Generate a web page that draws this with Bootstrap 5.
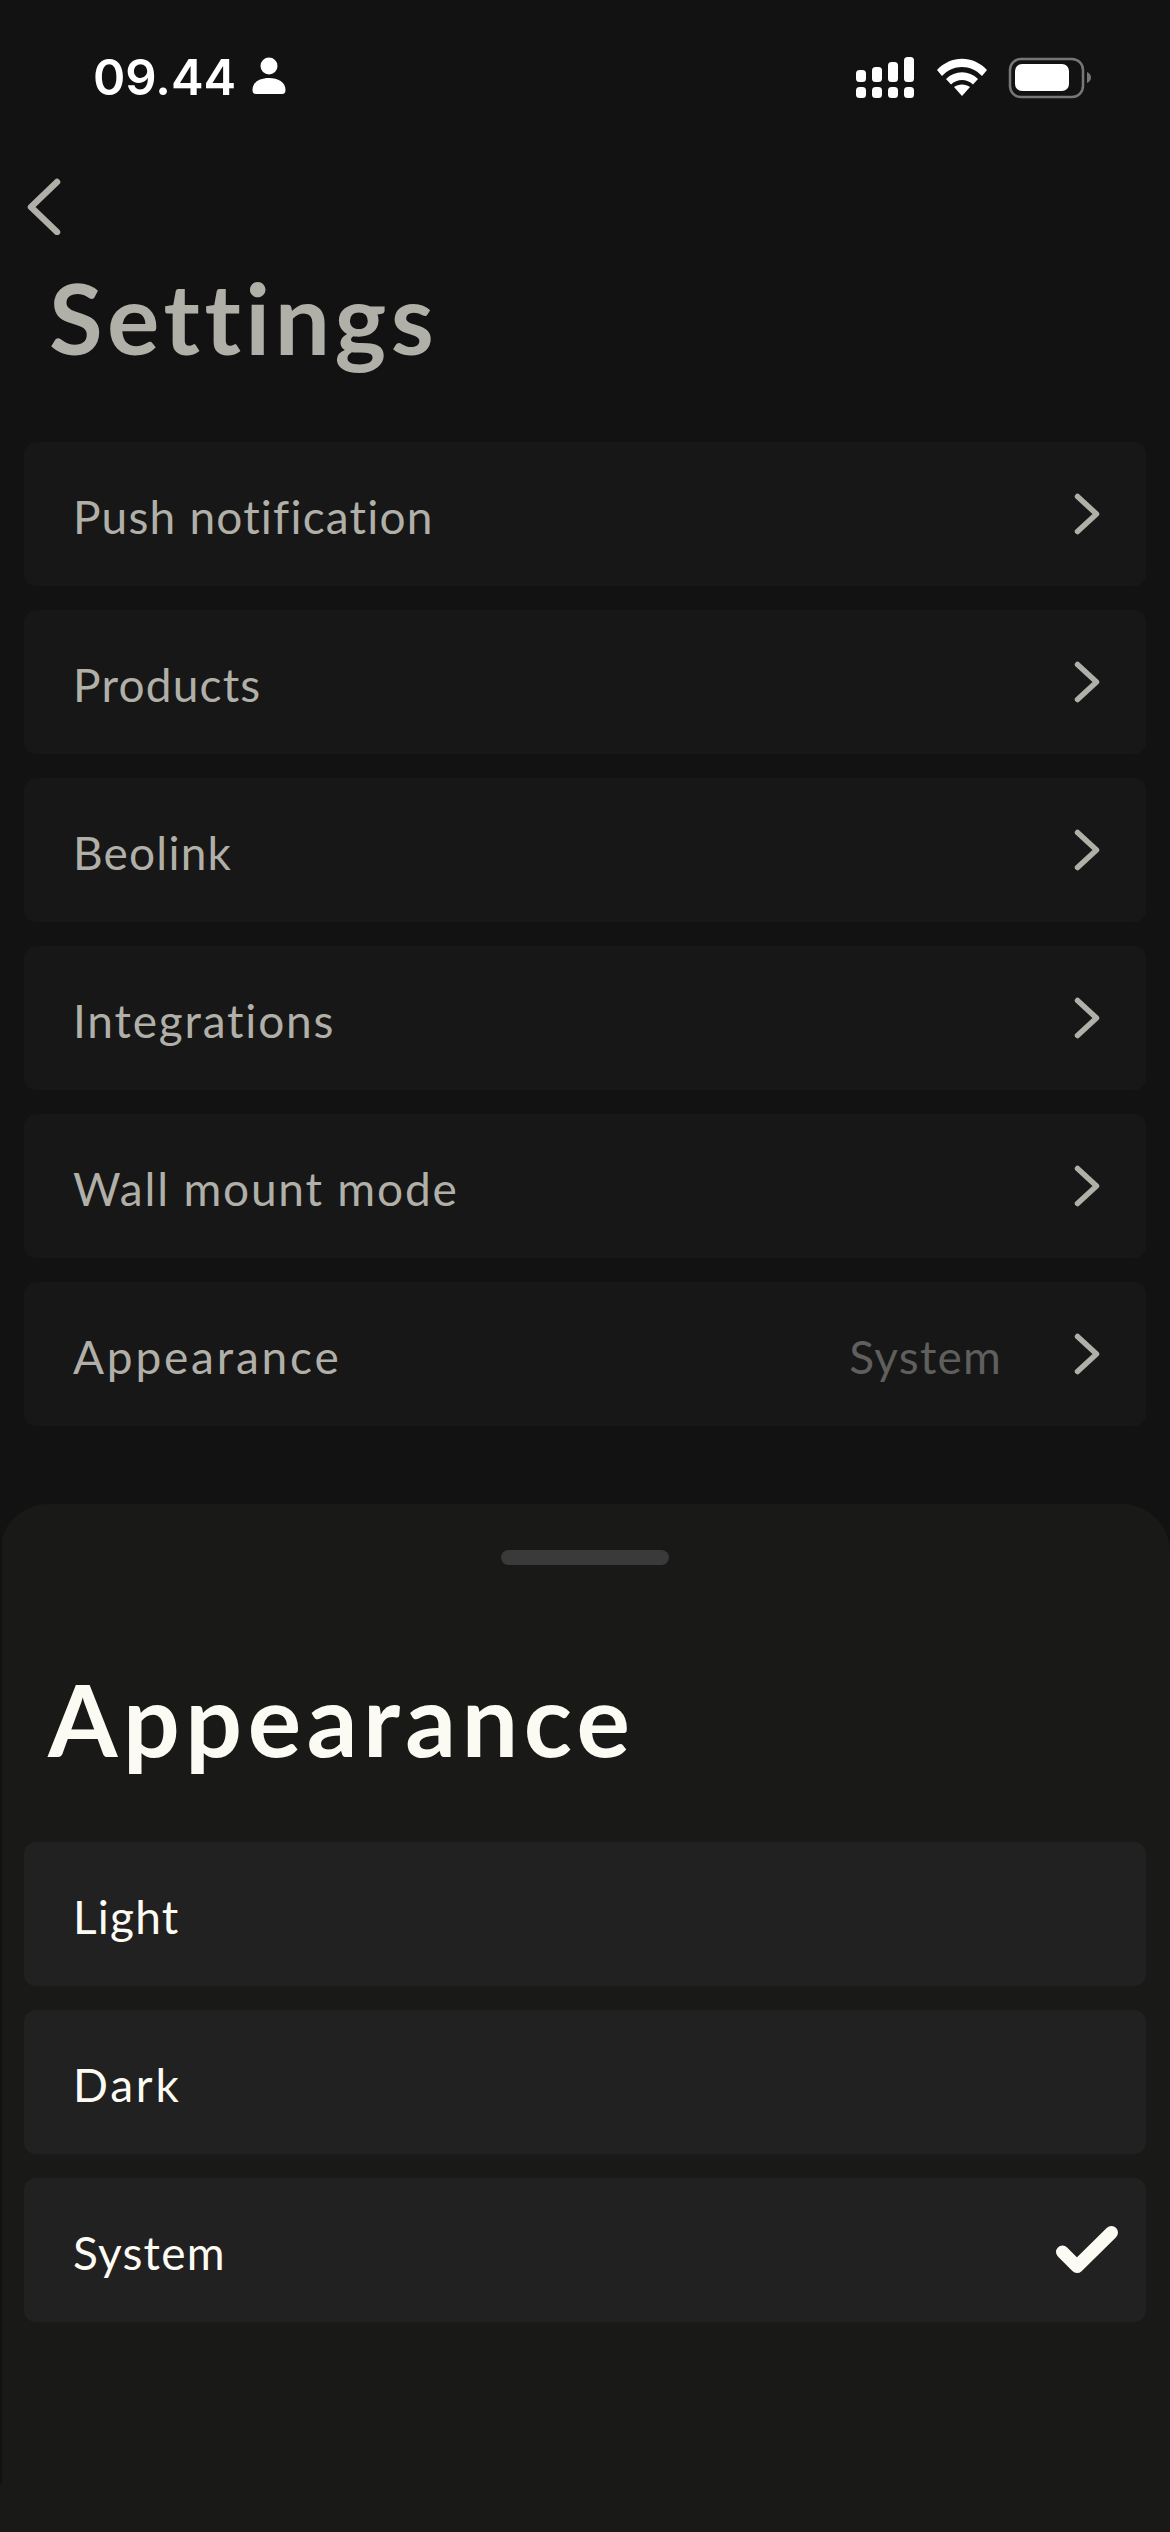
<!DOCTYPE html>
<html lang="en">
<head>
    <meta charset="UTF-8">
    <meta name="viewport" content="width=device-width, initial-scale=1.0">
    <title>Settings</title>
    <link href="https://cdn.jsdelivr.net/npm/bootstrap@5.3.0/dist/css/bootstrap.min.css" rel="stylesheet">
    <style>
        body {
            background-color: #111211;
            font-family: "Lato", "Liberation Sans", sans-serif;
        }
        .app-page {
            width: 1170px;
            height: 2532px;
            overflow: hidden;
        }
        .status-bar {
            height: 178px;
            padding: 57px 79px 0 93px;
        }
        .status-time {
            font-family: "Inter", "Liberation Sans", sans-serif;
            font-size: 49px;
            font-weight: 600;
            line-height: 42px;
            color: #fff;
        }
        .back-row {
            height: 57px;
            padding-left: 27px;
        }
        .page-title {
            font-size: 98px;
            font-weight: 700;
            line-height: 100px;
            letter-spacing: 4.5px;
            color: #b0afa8;
            margin: 32px 0 75px 49px;
        }
        .row-stack {
            gap: 24px;
            margin: 0 24px;
        }
        .setting-row {
            height: 144px;
            padding: 0 46px 0 49px;
            border: 0;
            border-radius: 12px !important;
            background-color: #171717;
            color: #b0afa8;
            font-size: 46px;
            letter-spacing: 1.2px;
            margin: 0 !important;
        }
        .row-label {
            padding-top: 5px;
        }
        .track-mid {
            letter-spacing: 1.8px;
        }
        .track-wide {
            letter-spacing: 2.8px;
        }
        .setting-value {
            color: #5f5f5d;
            margin-right: 72px;
        }
        .sheet {
            margin-top: 78px;
            background: linear-gradient(#111211, #111211) left top / 2px 980px no-repeat, #191918;
            border-radius: 48px 48px 0 0;
            padding-top: 46px;
        }
        .sheet-handle {
            width: 168px;
            height: 15px;
            border-radius: 8px;
            background-color: #3a3a3a;
        }
        .sheet-title {
            font-size: 100px;
            font-weight: 700;
            line-height: 100px;
            letter-spacing: 5.6px;
            color: #fcfbf3;
            margin: 103px 0 74px 48px;
        }
        .sheet .setting-row {
            background-color: #212121;
            color: #fcfbf3;
        }
        .sheet .check-row {
            padding-right: 26px;
        }
    </style>
</head>
<body>
    <div class="app-page d-flex flex-column">
        <div class="status-bar d-flex justify-content-between align-items-start">
            <div class="d-flex align-items-start gap-3">
                <span class="status-time">09.44</span>
                <svg width="34" height="38" viewBox="0 0 34 38" fill="#fff"><circle cx="17" cy="9" r="8.5"/><path d="M0.5 33C0.5 25 8 21 17 21s16.5 4 16.500 12c0 2.500-1 4-3.500 4H4c-2.500 0-3.500-1.500-3.500-4z"/></svg>
            </div>
            <svg width="235" height="42" viewBox="856 57 235 42">
                <g fill="#fff">
                    <rect x="856" y="70" width="10" height="12" rx="3.500"/>
                    <rect x="872" y="67" width="10" height="15" rx="3.500"/>
                    <rect x="888" y="62" width="10" height="20" rx="3.500"/>
                    <rect x="904" y="57" width="10" height="25" rx="3.500"/>
                    <rect x="856" y="87" width="10" height="11" rx="3.500"/>
                    <rect x="872" y="87" width="10" height="11" rx="3.500"/>
                    <rect x="888" y="87" width="10" height="11" rx="3.500"/>
                    <rect x="904" y="87" width="10" height="11" rx="3.500"/>
                    <path d="M962 96l-8-9c4.500-3.500 11.500-3.500 16 0z"/>
                    <path d="M937 70c14-15 36-15 50 0l-5 6c-11-12-29-12-40 0z"/>
                    <path d="M946 79c9-9 23-9 32 0l-5 5.500c-6-6-16-6-22 0z"/>
                    <rect x="1015" y="64" width="54" height="27" rx="7"/>
                </g>
                <rect x="1010" y="59" width="73" height="38" rx="11" fill="none" stroke="#777" stroke-width="2.500"/>
                <path d="M1087 72c2.500 1 4 3 4 5.500s-1.500 4.500-4 5.500z" fill="#777"/>
            </svg>
        </div>

        <div class="back-row">
            <svg width="36" height="57" viewBox="0 0 36 57" fill="none" stroke="#b0afa8" stroke-width="6.500" stroke-linecap="round" stroke-linejoin="round"><path d="M30 4L4 29L30 54"/></svg>
        </div>

        <h1 class="page-title">Settings</h1>

        <div class="list-group row-stack">
            <a class="list-group-item setting-row d-flex align-items-center justify-content-between"><span class="row-label">Push notification</span><svg width="26" height="42" viewBox="0 0 26 42" fill="none" stroke="#b0afa8" stroke-width="5.500" stroke-linecap="round" stroke-linejoin="round"><path d="M3.500 3.500L22.500 21L3.500 38.500"/></svg></a>
            <a class="list-group-item setting-row d-flex align-items-center justify-content-between"><span class="row-label">Products</span><svg width="26" height="42" viewBox="0 0 26 42" fill="none" stroke="#b0afa8" stroke-width="5.500" stroke-linecap="round" stroke-linejoin="round"><path d="M3.500 3.500L22.500 21L3.500 38.500"/></svg></a>
            <a class="list-group-item setting-row d-flex align-items-center justify-content-between"><span class="row-label">Beolink</span><svg width="26" height="42" viewBox="0 0 26 42" fill="none" stroke="#b0afa8" stroke-width="5.500" stroke-linecap="round" stroke-linejoin="round"><path d="M3.500 3.500L22.500 21L3.500 38.500"/></svg></a>
            <a class="list-group-item setting-row d-flex align-items-center justify-content-between"><span class="row-label track-mid">Integrations</span><svg width="26" height="42" viewBox="0 0 26 42" fill="none" stroke="#b0afa8" stroke-width="5.500" stroke-linecap="round" stroke-linejoin="round"><path d="M3.500 3.500L22.500 21L3.500 38.500"/></svg></a>
            <a class="list-group-item setting-row d-flex align-items-center justify-content-between"><span class="row-label track-mid">Wall mount mode</span><svg width="26" height="42" viewBox="0 0 26 42" fill="none" stroke="#b0afa8" stroke-width="5.500" stroke-linecap="round" stroke-linejoin="round"><path d="M3.500 3.500L22.500 21L3.500 38.500"/></svg></a>
            <a class="list-group-item setting-row d-flex align-items-center"><span class="row-label track-wide me-auto">Appearance</span><span class="row-label setting-value">System</span><svg width="26" height="42" viewBox="0 0 26 42" fill="none" stroke="#b0afa8" stroke-width="5.500" stroke-linecap="round" stroke-linejoin="round"><path d="M3.500 3.500L22.500 21L3.500 38.500"/></svg></a>
        </div>

        <div class="sheet flex-grow-1">
            <div class="sheet-handle mx-auto"></div>
            <h2 class="sheet-title">Appearance</h2>
            <div class="list-group row-stack">
                <a class="list-group-item setting-row d-flex align-items-center"><span class="row-label">Light</span></a>
                <a class="list-group-item setting-row d-flex align-items-center"><span class="row-label track-wide">Dark</span></a>
                <a class="list-group-item setting-row check-row d-flex align-items-center justify-content-between"><span class="row-label">System</span><svg width="64" height="48" viewBox="0 0 64 48" fill="none" stroke="#fcfbf3" stroke-width="13" stroke-linecap="round" stroke-linejoin="round"><path d="M6.500 26L21 40.500L55.500 6.500"/></svg></a>
            </div>
        </div>
    </div>
    <script src="https://cdn.jsdelivr.net/npm/bootstrap@5.3.0/dist/js/bootstrap.bundle.min.js"></script>
</body>
</html>
